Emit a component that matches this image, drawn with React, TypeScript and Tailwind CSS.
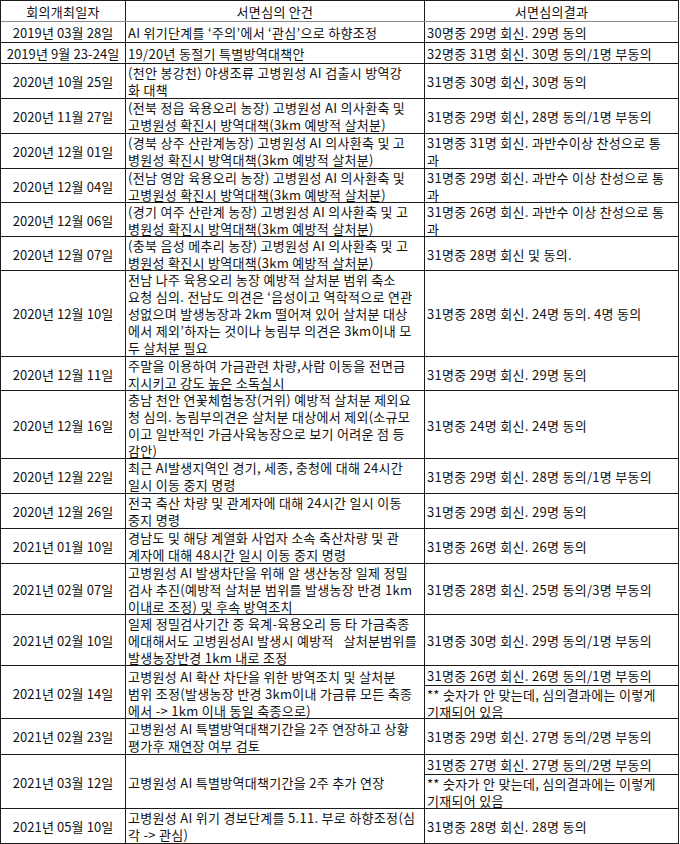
import React from "react";

type Row = {
  date: string;
  h: string;
  agenda: string[];
  result?: string[];
  split?: { top: string; topH: string; bottom: string[] };
};

const rows: Row[] = [
  { date: "2019년 03월 28일", h: "h-[21px]", agenda: ["AI 위기단계를 ‘주의’에서 ‘관심’으로 하향조정"], result: ["30명중 29명 회신. 29명 동의"] },
  { date: "2019년 9월 23-24일", h: "h-[21px]", agenda: ["19/20년 동절기 특별방역대책안"], result: ["32명중 31명 회신. 30명 동의/1명 부동의"] },
  { date: "2020년 10월 25일", h: "h-[35px]", agenda: ["(천안 봉강천) 야생조류 고병원성 AI 검출시 방역강", "화 대책"], result: ["31명중 30명 회신, 30명 동의"] },
  { date: "2020년 11월 27일", h: "h-[35px]", agenda: ["(전북 정읍 육용오리 농장) 고병원성 AI 의사환축 및", "고병원성 확진시 방역대책(3km 예방적 살처분)"], result: ["31명중 29명 회신, 28명 동의/1명 부동의"] },
  { date: "2020년 12월 01일", h: "h-[35px]", agenda: ["(경북 상주 산란계농장) 고병원성 AI 의사환축 및 고", "병원성 확진시 방역대책(3km 예방적 살처분)"], result: ["31명중 31명 회신. 과반수이상 찬성으로 통", "과"] },
  { date: "2020년 12월 04일", h: "h-[34px]", agenda: ["(전남 영암 육용오리 농장) 고병원성 AI 의사환축 및", "고병원성 확진시 방역대책(3km 예방적 살처분)"], result: ["31명중 29명 회신. 과반수 이상 찬성으로 통", "과"] },
  { date: "2020년 12월 06일", h: "h-[34px]", agenda: ["(경기 여주 산란계 농장) 고병원성 AI 의사환축 및 고", "병원성 확진시 방역대책(3km 예방적 살처분)"], result: ["31명중 26명 회신. 과반수 이상 찬성으로 통", "과"] },
  { date: "2020년 12월 07일", h: "h-[34px]", agenda: ["(충북 음성 메추리 농장) 고병원성 AI 의사환축 및 고", "병원성 확진시 방역대책(3km 예방적 살처분)"], result: ["31명중 28명 회신 및 동의."] },
  {
    date: "2020년 12월 10일",
    h: "h-[86px]",
    agenda: [
      "전남 나주 육용오리 농장 예방적 살처분 범위 축소",
      "요청 심의. 전남도 의견은 ‘음성이고 역학적으로 연관",
      "성없으며 발생농장과 2km 떨어져 있어 살처분 대상",
      "에서 제외’하자는 것이나 농림부 의견은 3km이내 모",
      "두 살처분 필요",
    ],
    result: ["31명중 28명 회신. 24명 동의. 4명 동의"],
  },
  { date: "2020년 12월 11일", h: "h-[34px]", agenda: ["주말을 이용하여 가금관련 차량,사람 이동을 전면금", "지시키고 강도 높은 소독실시"], result: ["31명중 29명 회신. 29명 동의"] },
  {
    date: "2020년 12월 16일",
    h: "h-[68px]",
    agenda: [
      "충남 천안 연꽃체험농장(거위) 예방적 살처분 제외요",
      "청 심의. 농림부의견은 살처분 대상에서 제외(소규모",
      "이고 일반적인 가금사육농장으로 보기 어려운 점 등",
      "감안)",
    ],
    result: ["31명중 24명 회신. 24명 동의"],
  },
  { date: "2020년 12월 22일", h: "h-[35px]", agenda: ["최근 AI발생지역인 경기, 세종, 충청에 대해 24시간", "일시 이동 중지 명령"], result: ["31명중 29명 회신. 28명 동의/1명 부동의"] },
  { date: "2020년 12월 26일", h: "h-[35px]", agenda: ["전국 축산 차량 및 관계자에 대해 24시간 일시 이동", "중지 명령"], result: ["31명중 29명 회신. 29명 동의"] },
  { date: "2021년 01월 10일", h: "h-[35px]", agenda: ["경남도 및 해당 계열화 사업자 소속 축산차량 및 관", "계자에 대해 48시간 일시 이동 중지 명령"], result: ["31명중 26명 회신. 26명 동의"] },
  {
    date: "2021년 02월 07일",
    h: "h-[51px]",
    agenda: ["고병원성 AI 발생차단을 위해 알 생산농장 일제 정밀", "검사 추진(예방적 살처분 범위를 발생농장 반경 1km", "이내로 조정) 및 후속 방역조치"],
    result: ["31명중 28명 회신. 25명 동의/3명 부동의"],
  },
  {
    date: "2021년 02월 10일",
    h: "h-[51px]",
    agenda: ["일제 정밀검사기간 중 육계-육용오리 등 타 가금축종", "에대해서도 고병원성AI 발생시 예방적   살처분범위를", "발생농장반경 1km 내로 조정"],
    result: ["31명중 30명 회신. 29명 동의/1명 부동의"],
  },
  {
    date: "2021년 02월 14일",
    h: "h-[53px]",
    agenda: ["고병원성 AI 확산 차단을 위한 방역조치 및 살처분", "범위 조정(발생농장 반경 3km이내 가금류 모든 축종", "에서 -> 1km 이내 동일 축종으로)"],
    split: { top: "31명중 26명 회신. 26명 동의/1명 부동의", topH: "h-[20px]", bottom: ["** 숫자가 안 맞는데, 심의결과에는 이렇게", "기재되어 있음"] },
  },
  { date: "2021년 02월 23일", h: "h-[36px]", agenda: ["고병원성 AI 특별방역대책기간을 2주 연장하고 상황", "평가후 재연장 여부 검토"], result: ["31명중 29명 회신. 27명 동의/2명 부동의"] },
  {
    date: "2021년 03월 12일",
    h: "h-[54px]",
    agenda: ["고병원성 AI 특별방역대책기간을 2주 추가 연장"],
    split: { top: "31명중 27명 회신. 27명 동의/2명 부동의", topH: "h-[20px]", bottom: ["** 숫자가 안 맞는데, 심의결과에는 이렇게", "기재되어 있음"] },
  },
  { date: "2021년 05월 10일", h: "h-[35px]", agenda: ["고병원성 AI 위기 경보단계를 5.11. 부로 하향조정(심", "각 -> 관심)"], result: ["31명중 28명 회신. 28명 동의"] },
];

function Lines({ lines }: { lines: string[] }) {
  return (
    <div className="flex flex-col">
      {lines.map((l, i) => (
        <div key={i} className="whitespace-pre">
          {l}
        </div>
      ))}
    </div>
  );
}

export default function App() {
  return (
    <div className="w-[680px] h-[844px] bg-white overflow-hidden">
      <div
        className="w-[679px] border-t border-l border-[#1a1a1a] text-[13px] leading-[17px] tracking-[0.3px] text-[#111]"
        style={{ fontFamily: '"Noto Sans CJK KR", "Noto Sans", sans-serif' }}
      >
        {/* Header */}
        <div className="grid grid-cols-[125px_299px_1fr] h-[21px] border-b border-[#8a8a8a]">
          <div className="flex items-center justify-center border-r border-[#1a1a1a]">회의개최일자</div>
          <div className="flex items-center justify-center border-r border-[#1a1a1a]">서면심의 안건</div>
          <div className="flex items-center justify-center border-r border-[#1a1a1a]">서면심의결과</div>
        </div>

        {rows.map((r, i) => (
          <div key={i} className={`grid grid-cols-[125px_299px_1fr] border-b border-[#1a1a1a] ${r.h}`}>
            <div className="flex items-center justify-center border-r border-[#1a1a1a] whitespace-nowrap tracking-[0.1px]">{r.date}</div>
            <div className="flex items-center pl-[2px] border-r border-[#1a1a1a]">
              <Lines lines={r.agenda} />
            </div>
            {r.split ? (
              <div className="flex flex-col border-r border-[#1a1a1a]">
                <div className={`flex items-center pl-[2px] border-b border-[#1a1a1a] ${r.split.topH}`}>
                  {r.split.top}
                </div>
                <div className="flex flex-1 items-center pl-[2px]">
                  <Lines lines={r.split.bottom} />
                </div>
              </div>
            ) : (
              <div className="flex items-center pl-[2px] border-r border-[#1a1a1a]">
                <Lines lines={r.result ?? []} />
              </div>
            )}
          </div>
        ))}
      </div>
    </div>
  );
}
